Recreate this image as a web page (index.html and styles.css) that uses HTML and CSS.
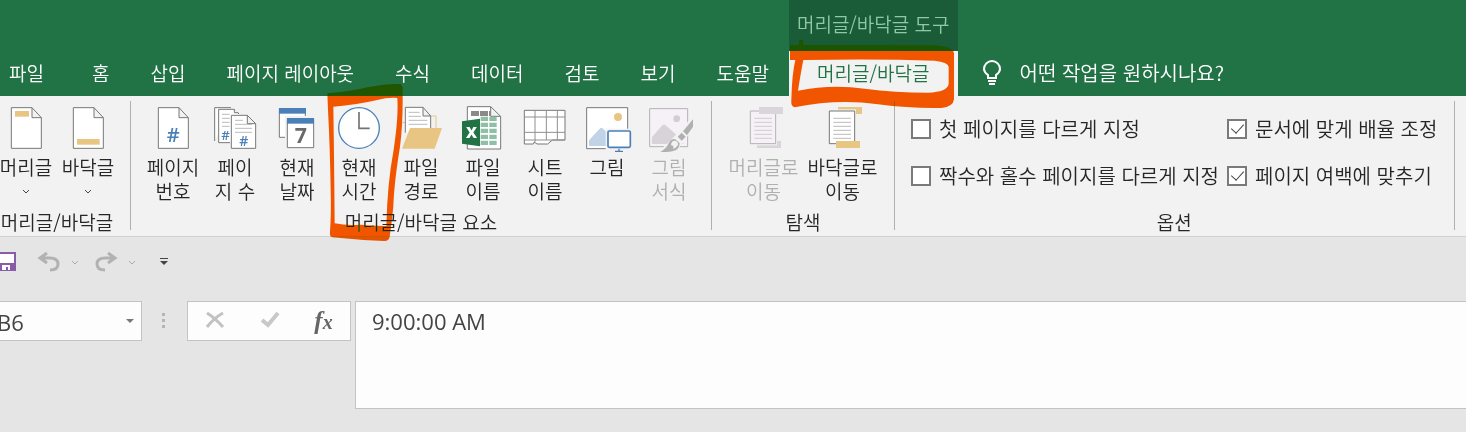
FILE: index.html
```
<!DOCTYPE html>
<html lang="ko">
	<head>
		<meta charset="UTF-8">
		<title>머리글/바닥글 도구</title>
		<link rel="stylesheet" href="styles.css">
	</head>
	<body>
		<header class="header">
			<nav class="tabs">
				<a class="file" href="#">파일</a>
				<a href="#">홈</a>
				<a href="#">삽입</a>
				<a href="#">페이지 레이아웃</a>
				<a href="#">수식</a>
				<a href="#">데이터</a>
				<a href="#">검토</a>
				<a href="#">보기</a>
				<a href="#">도움말</a>
			</nav>
			<div class="context">
				<p class="context-title">머리글/바닥글 도구</p>
				<a class="active" href="#">머리글/바닥글</a>
				<svg class="mark mark-tab" viewBox="0 0 540 330" aria-hidden="true">
					<path d="M36 135H62L64 120H75L77 135L470 136Q526 140 528 160V298Q526 320 490 324Q400 326 300 313Q180 295 50 322Q38 320 40 300Q42 220 52 180H36ZM76 180Q68 220 60 272Q160 252 260 266Q350 278 450 278Q508 276 512 252V200Q510 186 470 182Q300 176 76 180Z"/>
				</svg>
			</div>
			<button class="tell" type="button">
				<svg width="20" height="26" viewBox="0 0 20 26" fill="none" stroke="#fff" stroke-width="2">
					<path d="M6 18V15Q2 12 2 9A8 8 0 0 1 18 9Q18 12 14 15V18ZM6 21H14M7 24H13"/>
				</svg>
				어떤 작업을 원하시나요?
			</button>
		</header>

		<main class="ribbon">
			<section class="group first">
				<div class="btns">
					<button type="button">
						<svg class="icon" viewBox="0 0 132 132">
							<path class="page" d="M22 5H84L112 35V127H22ZM84 5V35H112"/>
							<path class="gold" d="M33 15H75V32H33Z"/>
						</svg>
						<span>머리글</span>
						<svg class="arrow" viewBox="0 0 8 5"><path d="M1 1L4 4L7 1"/></svg>
					</button>
					<button type="button">
						<svg class="icon" viewBox="0 0 132 132">
							<path class="page" d="M22 5H84L112 35V127H22ZM84 5V35H112"/>
							<path class="gold" d="M33 99H101V116H33Z"/>
						</svg>
						<span>바닥글</span>
						<svg class="arrow" viewBox="0 0 8 5"><path d="M1 1L4 4L7 1"/></svg>
					</button>
				</div>
				<h2>머리글/바닥글</h2>
			</section>

			<section class="group">
				<div class="btns">
					<button type="button">
						<svg class="icon" viewBox="0 0 132 132">
							<path class="page" d="M22 5H84L112 35V127H22ZM84 5V35H112"/>
							<text class="hash" x="47" y="109" font-size="60">#</text>
						</svg>
						<span>페이지<br>번호</span>
					</button>
					<button type="button">
						<svg class="icon" viewBox="0 0 132 132">
							<path class="page" d="M54 5H5V105"/>
							<path class="page" d="M51 110H17V10H64L78 24"/>
							<path class="page" d="M64 10V20H76"/>
							<path class="rule" d="M27 25H50M27 37H50M27 49H50M27 61H50"/>
							<path class="page" d="M55 28H103L128 53V127H55ZM103 28V53H128"/>
							<path class="rule" d="M66 43H90M66 55H117M66 67H117M66 79H117"/>
							<text class="hash" x="25" y="101" font-size="40">#</text>
							<text class="hash" x="79" y="119" font-size="42">#</text>
						</svg>
						<span>페이<br>지 수</span>
					</button>
					<button type="button">
						<svg class="icon" viewBox="0 0 132 132">
							<path class="page" d="M13 8H91V94H13Z"/>
							<path class="blue" d="M12 6H93V23H12Z"/>
							<path fill="#f2f2f2" d="M30 30H122V130H30Z"/>
							<path class="page" d="M37 38H116V125H37Z"/>
							<path class="blue" d="M36 36H117V53H36Z"/>
							<text class="day" x="59" y="111" font-size="64">7</text>
						</svg>
						<span>현재<br>날짜</span>
					</button>
					<button type="button">
						<svg class="icon" viewBox="0 0 132 132">
							<circle cx="66" cy="66" r="61" fill="#fff" stroke="#4a7fb8" stroke-width="4"/>
							<path d="M66 18V67H98" fill="none" stroke="#737373" stroke-width="5"/>
						</svg>
						<span>현재<br>시간</span>
						<svg class="mark mark-time" viewBox="0 0 255 495" aria-hidden="true">
							<path d="M10 40Q80 34 130 22Q190 10 230 12L236 20V60Q236 140 228 200Q210 310 208 380Q203 430 197 470Q194 484 180 483Q100 480 25 472Q16 470 18 455Q22 400 20 330Q18 200 12 90ZM28 80Q100 74 160 60Q190 52 220 54Q224 110 208 215Q190 310 187 438Q150 438 110 434Q70 438 32 430Q30 200 28 80Z"/>
						</svg>
					</button>
					<button type="button">
						<svg class="icon" viewBox="0 0 132 132">
							<path d="M9 50H40M90 30H111V75" fill="none" stroke="#e8c583" stroke-width="3"/>
							<path class="page" d="M19 80V4H72L95 30V80M72 4V30H95"/>
							<path class="rule" d="M29 19H62M29 31H66M29 43H85M29 55H85"/>
							<path class="gold" d="M33 66H129L107 128H9Z"/>
						</svg>
						<span>파일<br>경로</span>
					</button>
					<button type="button">
						<svg class="icon" viewBox="0 0 132 132">
							<path class="page" d="M19 2H89L119 31V129H19ZM89 2V31H119"/>
							<path d="M30 15H54V30H30ZM57 15H81V30H57ZM84 15H88V30H84Z" fill="#8a8a8a"/>
							<path d="M59 32H81V45H59ZM85 32H107V45H85ZM59 50H81V63H59ZM85 50H107V63H85ZM59 68H81V81H59ZM85 68H107V81H85ZM59 86H81V99H59ZM85 86H107V99H85ZM59 104H81V117H59ZM85 104H107V117H85Z" fill="#8fbfa5"/>
							<path d="M3 46L57 38V121L3 113Z" fill="#217346"/>
							<text class="xl" x="15" y="96" font-size="46">X</text>
						</svg>
						<span>파일<br>이름</span>
					</button>
					<button type="button">
						<svg class="icon" viewBox="0 0 132 132">
							<path class="page" d="M4 13H126V102H88L74 114H42L34 108L31 114H4Z"/>
							<path d="M4 102H126M4 33H126M4 79H126M36 13V102M70 13V102M103 13V102M38 102L31 114" fill="none" stroke="#8f8f8f" stroke-width="3"/>
						</svg>
						<span>시트<br>이름</span>
					</button>
					<button type="button">
						<svg class="icon" viewBox="0 0 132 132">
							<path class="page" d="M5 5H128V128H5Z"/>
							<circle class="gold" cx="99" cy="33" r="12"/>
							<path d="M12 120V103L44 68Q49 63 54 68L68 82V120Z" fill="#c1d3e7"/>
							<path fill="#f2f2f2" d="M62 68H142V142H62Z"/>
							<rect x="69" y="75" width="67" height="49" rx="4" fill="#fff" stroke="#4a7fb8" stroke-width="5"/>
							<path d="M102 128V136M90 136H114" stroke="#4a7fb8" stroke-width="4"/>
						</svg>
						<span>그림</span>
					</button>
					<button type="button" disabled>
						<svg class="icon" viewBox="0 0 132 132">
							<path class="page" d="M8 8H122V122H8Z"/>
							<circle cx="89" cy="38" r="10" fill="#d2cdd3"/>
							<path d="M15 114V93L46 58Q51 53 56 58L95 92L110 114Z" fill="#d8d2d9"/>
							<path d="M138 30V66L110 108L97 124Q78 146 30 140L66 108L96 76Z" fill="#f2f2f2"/>
							<path d="M138 40V62L120 88L108 76ZM92 92L104 80L116 92L104 104Z" fill="#b0b0b0"/>
							<path d="M40 137Q57 130 65 112Q71 98 84 99L98 112Q98 126 86 133Q70 140 40 137Z" fill="#b0b0b0"/>
							<path d="M72 118Q72 103 85 104Q94 107 93 117Q87 127 78 128Q82 118 72 118Z" fill="#f2f2f2"/>
						</svg>
						<span>그림<br>서식</span>
					</button>
				</div>
				<h2>머리글/바닥글 요소</h2>
			</section>

			<section class="group nav">
				<div class="btns">
					<button type="button" disabled>
						<svg class="icon" viewBox="0 0 132 132">
							<path d="M45 105H117V126H45Z" fill="#d9d5da"/>
							<path fill="#f2f2f2" d="M22 12H105V118H22Z"/>
							<path class="page" d="M25 15H101V113H25Z"/>
							<path class="rule" d="M37 37H90M37 49H90M37 61H90M37 73H90M37 85H90M37 97H90"/>
							<path d="M51 3H123V24H51Z" fill="#d9d5da"/>
						</svg>
						<span>머리글로<br>이동</span>
					</button>
					<button type="button">
						<svg class="icon" viewBox="0 0 132 132">
							<path class="gold" d="M51 3H123V24H51Z"/>
							<path fill="#f2f2f2" d="M22 10H105V116H22Z"/>
							<path class="page" d="M25 15H101V113H25Z"/>
							<path class="rule" d="M37 37H90M37 49H90M37 61H90M37 73H90M37 85H90M37 97H90"/>
							<path class="gold" d="M45 105H117V126H45Z"/>
						</svg>
						<span>바닥글로<br>이동</span>
					</button>
				</div>
				<h2>탐색</h2>
			</section>

			<section class="group options">
				<div class="checks">
					<label><input type="checkbox">첫 페이지를 다르게 지정</label>
					<label><input type="checkbox" checked>문서에 맞게 배율 조정</label>
					<label><input type="checkbox">짝수와 홀수 페이지를 다르게 지정</label>
					<label><input type="checkbox" checked>페이지 여백에 맞추기</label>
				</div>
				<h2>옵션</h2>
			</section>
		</main>

		<div class="quick">
			<button type="button" aria-label="저장">
				<svg width="16" height="20" viewBox="0 0 16 20">
					<path d="M0 0H16V19H0Z" fill="#8a5ba8"/>
					<path d="M0 2H14V11H0ZM2 13H10V18H8V15H6V18H2Z" fill="#fff"/>
				</svg>
			</button>
			<button class="undo" type="button" aria-label="실행 취소">
				<svg width="22" height="20" viewBox="0 0 22 20" fill="none" stroke="#b2b2b2" stroke-width="3">
					<path d="M9 1L2 6L9 11M2 6H12Q20 6 20 12Q20 18 12 18"/>
				</svg>
				<svg class="arrow" viewBox="0 0 8 5"><path d="M1 1L4 4L7 1"/></svg>
			</button>
			<button class="undo" type="button" aria-label="다시 실행">
				<svg width="22" height="20" viewBox="0 0 22 20" fill="none" stroke="#b2b2b2" stroke-width="3">
					<path d="M13 1L20 6L13 11M20 6H10Q2 6 2 12Q2 18 10 18"/>
				</svg>
				<svg class="arrow" viewBox="0 0 8 5"><path d="M1 1L4 4L7 1"/></svg>
			</button>
			<button class="more" type="button" aria-label="사용자 지정">
				<svg width="8" height="8" viewBox="0 0 8 8" fill="#444"><path d="M0 0H8V1H0ZM0 3H8L4 7Z"/></svg>
			</button>
		</div>

		<div class="formula">
			<div class="name">
				<input type="text" value="B6" aria-label="이름 상자">
				<button type="button" aria-label="이름 목록">
					<svg width="8" height="4" viewBox="0 0 8 4" fill="#777"><path d="M0 0H8L4 4Z"/></svg>
				</button>
			</div>
			<svg class="dots" width="4" height="16" viewBox="0 0 4 16" fill="#b5b5b5"><path d="M0 0H3V3H0ZM0 6H3V9H0ZM0 12H3V15H0Z"/></svg>
			<div class="tools">
				<button type="button" aria-label="취소">
					<svg width="20" height="18" viewBox="0 0 20 18" fill="none" stroke="#c2c2c2" stroke-width="3"><path d="M2 2Q10 7 18 16M18 2Q9 7 2 16"/></svg>
				</button>
				<button type="button" aria-label="입력">
					<svg width="20" height="18" viewBox="0 0 20 18" fill="none" stroke="#c8c8c8" stroke-width="4"><path d="M2 9L8 14L18 2"/></svg>
				</button>
				<button class="fx" type="button" aria-label="함수 삽입">f<small>x</small></button>
			</div>
			<textarea aria-label="수식 입력줄">9:00:00 AM</textarea>
		</div>
	</body>
</html>
```
FILE: styles.css
```
*{
	box-sizing: border-box;
}
body{
	margin: 0;
	background-color: #e5e5e5;
	color: #262626;
	font-family: "Noto Sans CJK KR", sans-serif;
	font-size: 20px;
	font-weight: 350;
	line-height: 24px;
	white-space: nowrap;
}
button{
	margin: 0;
	padding: 0;
	border: 0;
	background: none;
	color: inherit;
	font: inherit;
}
a{
	color: #fff;
	text-decoration: none;
}
svg{
	overflow: visible;
}

/* title bar and tabs */
.header{
	display: flex;
	align-items: flex-end;
	background-color: #217346;
	color: #fff;
}
.tabs{
	display: flex;
	font-size: 19px;
}
.tabs a{
	padding: 10px 20px 11px 21px;
}
.tabs .file{
	padding-left: 9px;
	padding-right: 27px;
}
.context{
	position: relative;
	display: flex;
	flex-direction: column;
	font-size: 19px;
	text-align: center;
}
.context-title{
	margin: 0;
	padding: 12px 8px 15px;
	background-color: #1b5c38;
	color: #90c8a6;
}
.active{
	padding: 10px 0 11px;
	background-color: #f2f2f2;
	color: #217346;
}
.tell{
	display: flex;
	align-items: center;
	gap: 18px;
	padding: 9px 24px 10px;
}

/* marker strokes */
.mark{
	position: absolute;
	fill: #f65500;
	fill-rule: evenodd;
	mix-blend-mode: darken;
	pointer-events: none;
}
.mark-tab{
	left: -11px;
	top: 0;
	width: 180px;
	height: 110px;
}
.mark-time{
	left: -4px;
	top: -26px;
	width: 85px;
	height: 165px;
}

/* ribbon */
.ribbon{
	display: flex;
	border-bottom: 1px solid #d0d0d0;
	background-color: #f2f2f2;
}
.group{
	display: flex;
	flex-direction: column;
	justify-content: space-between;
	margin: 5px 0 6px;
	padding: 5px 11px 0;
	border-right: 1px solid #b0b0b0;
}
.group.first{
	margin-left: -5px;
	padding-left: 0;
}
.group h2{
	margin: 11px 0 0;
	font-size: 19px;
	font-weight: 350;
	line-height: 16px;
	text-align: center;
}
.btns{
	display: flex;
}
.btns button{
	position: relative;
	display: flex;
	flex-direction: column;
	align-items: center;
	justify-content: flex-start;
	width: 62px;
	font-size: 19px;
}
.nav .btns button{
	width: 79px;
}
.btns button:disabled{
	color: #b0b0b0;
}
.icon{
	width: 44px;
	height: 44px;
	margin-bottom: 5px;
}
.page{
	fill: #fff;
	stroke: #777;
	stroke-width: 3;
}
.rule{
	fill: none;
	stroke: #9a9a9a;
	stroke-width: 2;
}
:disabled .page{
	fill: #f6f1f7;
	stroke: #b5b0b6;
}
:disabled .rule{
	stroke: #bdb8be;
}
.gold{
	fill: #e8c583;
}
.blue{
	fill: #4a7fb8;
}
.hash, .day, .xl{
	font-family: "Open Sans", sans-serif;
	font-weight: 600;
	fill: #4a7fb8;
}
.day{
	font-weight: 700;
	fill: #6a6a6a;
}
.xl{
	font-weight: 800;
	fill: #fff;
}
.arrow{
	width: 8px;
	height: 5px;
	fill: none;
	stroke: #444;
}
.btns .arrow{
	margin-top: 10px;
}

.nav{
	padding: 5px 12px 0;
}
.options{
	padding: 16px 17px 0 16px;
}
.checks{
	display: grid;
	grid-template-columns: auto auto;
	gap: 23px 8px;
}
.checks label{
	display: flex;
	align-items: center;
	gap: 8px;
}
.checks input{
	appearance: none;
	width: 20px;
	height: 20px;
	margin: 0;
	border: 2px solid #7a7a7a;
	background-color: #fff;
}
.checks input:checked::after{
	content: "";
	display: block;
	width: 6px;
	height: 11px;
	margin: 0 0 0 5px;
	border: solid #444;
	border-width: 0 1px 1px 0;
	transform: rotate(42deg);
}

/* quick access */
.quick{
	display: flex;
	align-items: center;
	height: 50px;
	gap: 22px;
}
.quick button{
	display: flex;
	align-items: center;
}
.quick .undo{
	gap: 11px;
}
.quick .arrow{
	stroke: #aaa;
}
.quick .undo + .undo{
	margin-left: -6px;
}
.quick .more{
	margin-left: 2px;
}

/* formula bar */
.formula{
	display: flex;
	align-items: flex-start;
	padding-top: 14px;
	color: #444;
}
.name, .tools, .formula textarea{
	border: 1px solid #c3c3c3;
	background-color: #fdfdfd;
}
.name{
	display: flex;
	width: 142px;
	height: 40px;
	border-left: 0;
}
.name input, .formula textarea{
	color: #444;
	font-family: "Open Sans", "Noto Sans CJK KR", sans-serif;
	font-size: 22px;
	font-weight: 400;
	line-height: 24px;
}
.name input{
	flex: 1;
	min-width: 0;
	padding: 2px 0 0;
	border: 0;
	background: none;
	text-indent: -3px;
}
.name button{
	display: flex;
	align-items: center;
	padding: 0 7px;
}
.dots{
	margin: 12px 21px 0 20px;
}
.tools{
	display: flex;
	align-items: center;
	justify-content: space-around;
	width: 164px;
	height: 40px;
	margin-right: 4px;
}
.fx{
	font-family: "Liberation Serif", serif;
	font-size: 25px;
	font-style: italic;
	font-weight: 700;
	color: #666;
}
.fx small{
	font-size: 20px;
}
.formula textarea{
	flex: 1;
	height: 108px;
	padding: 7px 16px;
	resize: none;
	border-right: 0;
}
```
